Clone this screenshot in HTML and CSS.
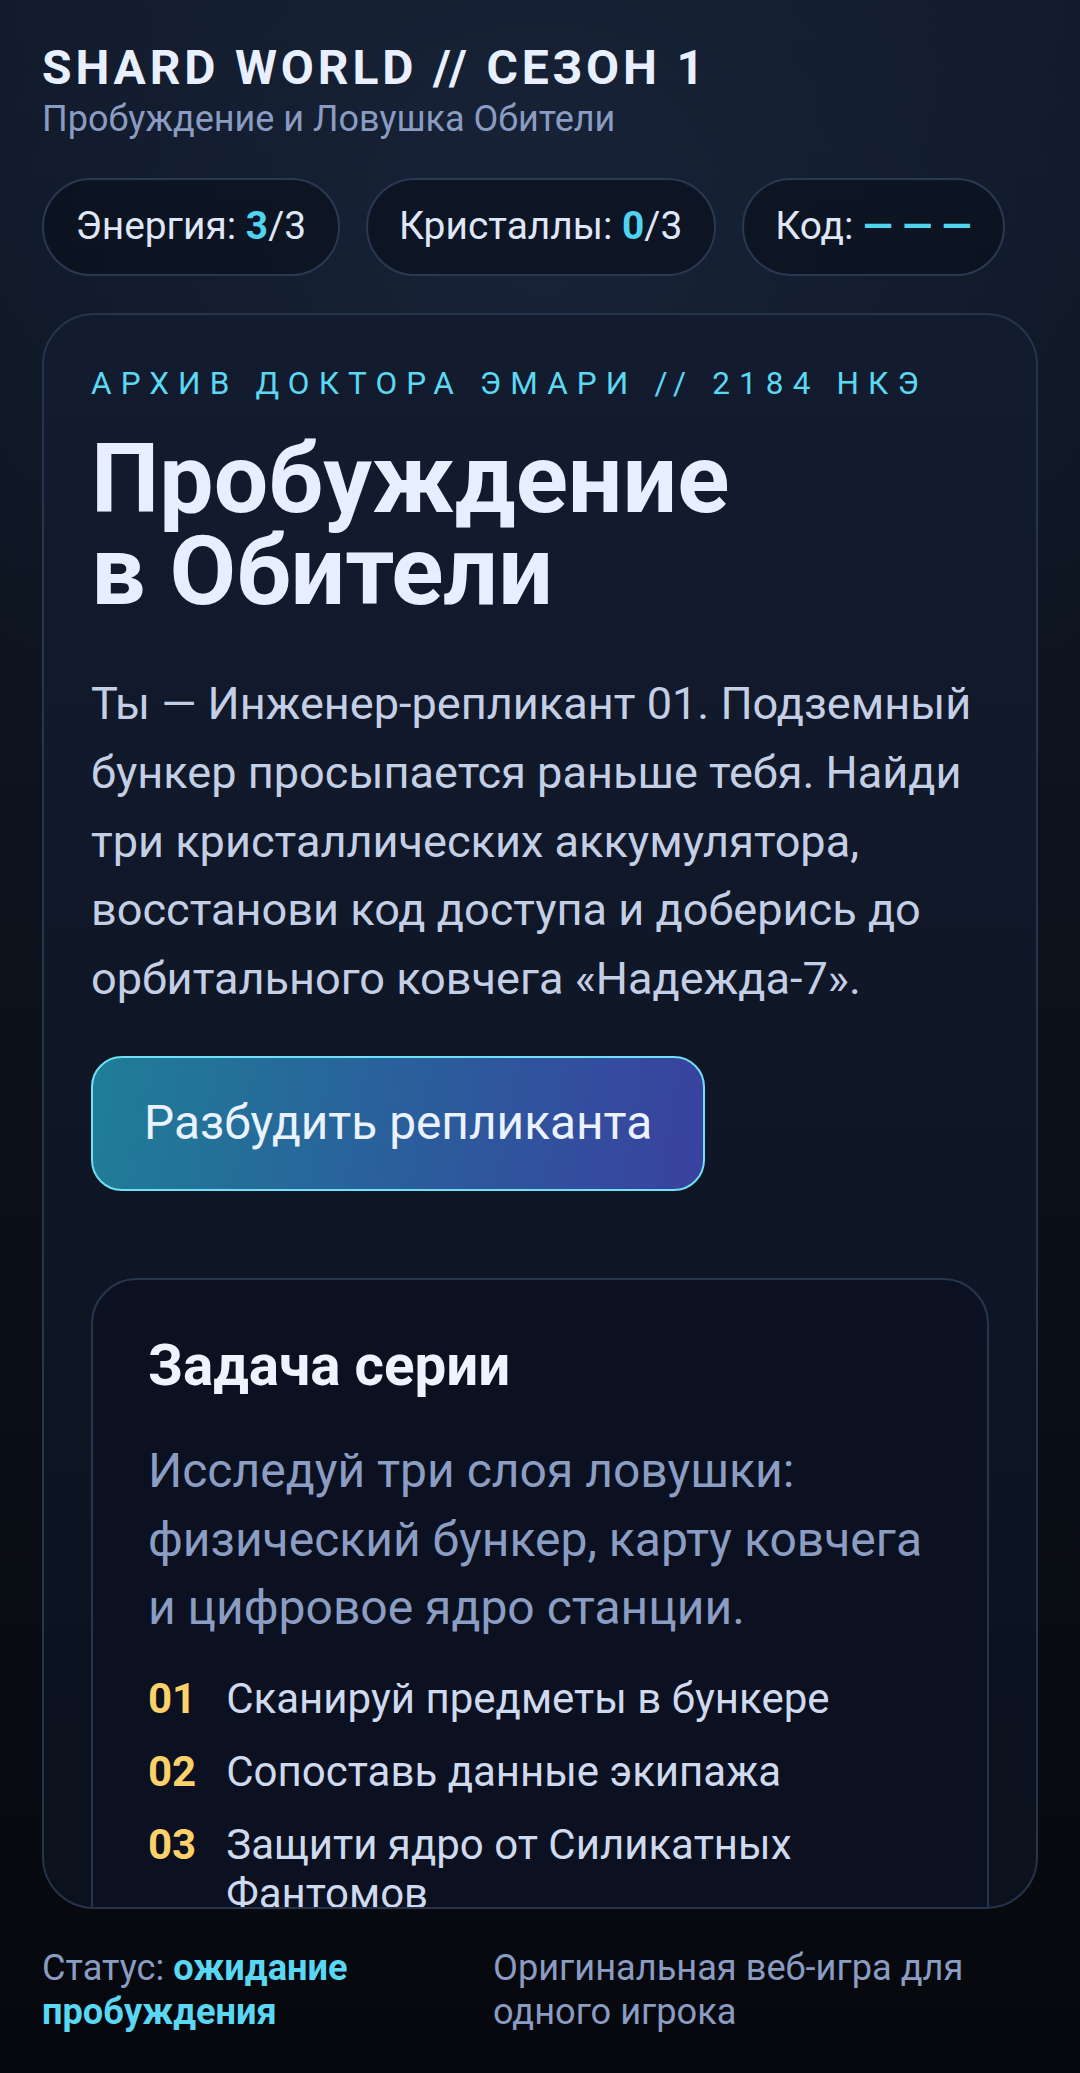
FILE: index.html
```html
<!DOCTYPE html>
<html lang="ru">
<head>
<meta charset="utf-8">
<title>Shard World // Сезон 1</title>
<link rel="stylesheet" href="styles.css">
</head>
<body>
<div class="page">
  <header class="top">
    <h1 class="brand">SHARD WORLD // СЕЗОН 1</h1>
    <p class="subtitle">Пробуждение и Ловушка Обители</p>
  </header>

  <div class="stats">
    <div class="pill">Энергия: <b class="accent">3</b>/3</div>
    <div class="pill">Кристаллы: <b class="accent">0</b>/3</div>
    <div class="pill">Код: <b class="accent">— — —</b></div>
  </div>

  <main class="card">
    <p class="eyebrow">Архив доктора Эмари // 2184 НКЭ</p>
    <h2 class="headline">Пробуждение<br>в Обители</h2>
    <p class="lead">Ты — Инженер-репликант 01. Подземный бункер просыпается раньше тебя. Найди три кристаллических аккумулятора, восстанови код доступа и доберись до орбитального ковчега «Надежда-7».</p>
    <button class="cta" type="button">Разбудить репликанта</button>

    <section class="task">
      <h3 class="task-title">Задача серии</h3>
      <p class="task-text">Исследуй три слоя ловушки: физический бункер, карту ковчега и цифровое ядро станции.</p>
      <ol class="steps">
        <li class="step"><span class="num">01</span><span class="step-text">Сканируй предметы в бункере</span></li>
        <li class="step"><span class="num">02</span><span class="step-text">Сопоставь данные экипажа</span></li>
        <li class="step"><span class="num">03</span><span class="step-text">Защити ядро от Силикатных Фантомов</span></li>
      </ol>
    </section>
  </main>

  <footer class="foot">
    <p class="status">Статус: <b class="status-val">ожидание пробуждения</b></p>
    <p class="credit">Оригинальная веб-игра для одного игрока</p>
  </footer>
</div>
</body>
</html>
```

FILE: styles.css
```css
* { box-sizing: border-box; }

html, body {
  margin: 0;
  padding: 0;
  height: 100%;
}

body {
  font-family: Roboto, "Noto Sans", "Liberation Sans", sans-serif;
  color: #e3eaf8;
  background:
    radial-gradient(ellipse 90% 45% at 50% 12%, rgba(30, 44, 70, 0.55), rgba(30, 44, 70, 0) 70%),
    linear-gradient(180deg, #111a2a 0%, #0b1019 55%, #06080d 100%);
}

.page {
  height: 100vh;
  display: flex;
  flex-direction: column;
  gap: 37px;
  padding: 42px 42px 40px;
}

.top { flex: none; }

.brand {
  margin: 0;
  font-size: 48px;
  line-height: 1.1;
  font-weight: 700;
  letter-spacing: 0.08em;
  color: #e8efff;
}

.subtitle {
  margin: 3px 0 0;
  font-size: 36px;
  line-height: 1.2;
  color: #8b9cc2;
}

.stats {
  flex: none;
  display: flex;
  gap: 26px;
}

.pill {
  padding: 23.5px 31.5px;
  border: 2px solid #2a3852;
  border-radius: 999px;
  background: rgba(8, 13, 24, 0.55);
  font-size: 38.9px;
  line-height: 1.2;
  color: #dfe7f7;
  white-space: nowrap;
}

.accent {
  color: #4fd3ef;
  font-weight: 700;
}

.card {
  flex: 1;
  min-height: 0;
  overflow: hidden;
  border: 2px solid #26344c;
  border-radius: 52px;
  padding: 47px 47px 0;
  background: linear-gradient(180deg, #131c2f 0%, #0f1727 45%, #0b111d 100%);
}

.eyebrow {
  margin: 0;
  font-size: 31.5px;
  line-height: 1.4;
  letter-spacing: 0.29em;
  text-transform: uppercase;
  color: #5cd8f2;
}

.headline {
  margin: 28px 0 0;
  font-size: 96.6px;
  line-height: 0.95;
  font-weight: 700;
  color: #e6eeff;
}

.lead {
  margin: 53px 0 0;
  font-size: 45.1px;
  line-height: 68.7px;
  color: #c4cfe6;
}

.cta {
  display: block;
  margin: 42px 0 0;
  padding: 37px 51px;
  border: 2px solid #6fe0f6;
  border-radius: 31px;
  background: linear-gradient(100deg, #1f7e97 0%, #2b5c9c 55%, #3a419f 100%);
  font-family: inherit;
  font-size: 47.8px;
  line-height: 1.2;
  color: #eaf2ff;
}

.task {
  margin-top: 87px;
  border: 2px solid #26344c;
  border-radius: 46px;
  padding: 53px 55px 60px;
  background: #0b1120;
}

.task-title {
  margin: 0;
  font-size: 56.5px;
  line-height: 1.2;
  font-weight: 700;
  color: #eef3ff;
}

.task-text {
  margin: 36px 0 0;
  font-size: 48px;
  line-height: 68.7px;
  color: #8b9dc2;
}

.steps {
  list-style: none;
  margin: 31px 0 0;
  padding: 0;
  display: flex;
  flex-direction: column;
  gap: 24px;
}

.step {
  display: flex;
  gap: 30px;
  font-size: 42px;
  line-height: 49px;
}

.num {
  flex: none;
  font-weight: 700;
  color: #fcd06b;
}

.step-text { color: #d0daee; }

.foot {
  flex: none;
  display: flex;
  gap: 26px;
  font-size: 36.2px;
  line-height: 43.5px;
}

.status {
  margin: 0;
  width: 425px;
  color: #8b9cc2;
}

.status-val {
  color: #5ad8f3;
  font-weight: 700;
}

.credit {
  margin: 0;
  width: 520px;
  color: #8b9cc2;
}
```
